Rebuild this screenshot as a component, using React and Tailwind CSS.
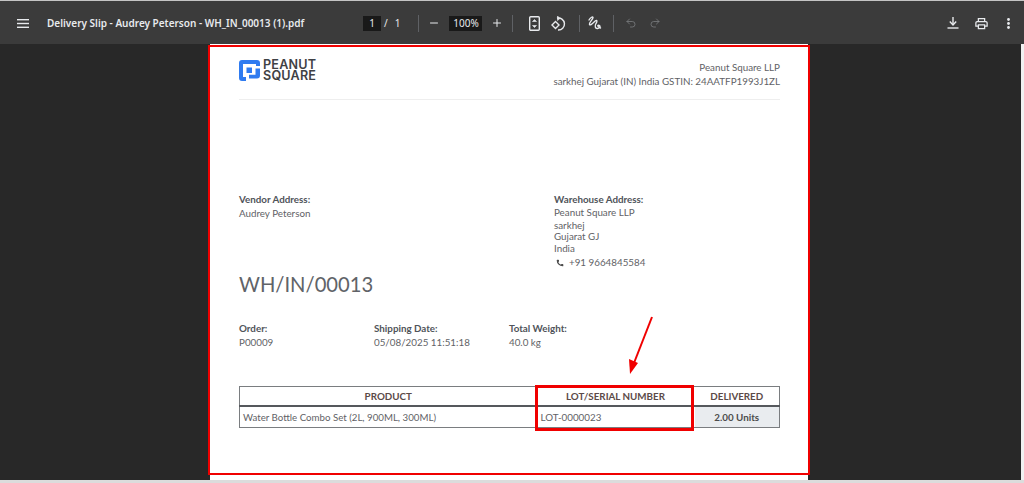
import React from 'react';
import { Minus, Plus, Undo2, Redo2, Phone } from 'lucide-react';

const Sep = () => <div className="w-px h-[17px] bg-[#5f6165]" />;

const Logo = () => (
  <svg width="21" height="21" viewBox="0 0 21 21" fill="#2f7bf0">
    <path d="M3 0H18A3 3 0 0 1 21 3V6H17V4H4V17H7V21H3A3 3 0 0 1 0 18V3A3 3 0 0 1 3 0Z" />
    <rect x="7.5" y="7.5" width="5.5" height="5.5" />
    <path d="M16.5 8.5H21V15.5A3 3 0 0 1 18 18.5H10V14.8H16.5Z" />
  </svg>
);

const MenuIcon = () => (
  <svg width="12" height="9" viewBox="0 0 12 9" fill="#e8eaed">
    <rect width="12" height="1.4" />
    <rect y="3.8" width="12" height="1.4" />
    <rect y="7.6" width="12" height="1.4" />
  </svg>
);

const FitIcon = () => (
  <svg width="11" height="15" viewBox="0 0 11 15" fill="none" stroke="#e8eaed" strokeWidth="1.4">
    <rect x="0.7" y="0.7" width="9.6" height="13.6" rx="1" />
    <path d="M3.5 5.5L5.5 3.5 7.5 5.5ZM3.5 9.5L5.5 11.5 7.5 9.5Z" fill="#e8eaed" strokeWidth="0.6" />
  </svg>
);

const RotateIcon = () => (
  <svg width="16" height="15" viewBox="0 0 16 15" fill="none" stroke="#e8eaed" strokeWidth="1.4">
    <path d="M6 2.2A6 6 0 1 1 7 14" />
    <path d="M6.5 0L9 2.4 6.5 4.6Z" fill="#e8eaed" strokeWidth="0.6" />
    <path d="M4.5 5.5L8 9 4.5 12.5 1 9Z" />
  </svg>
);

const DrawIcon = () => (
  <svg width="14" height="14" viewBox="0 0 14 14" fill="none" stroke="#e8eaed" strokeWidth="1.4" strokeLinecap="round">
    <path d="M1 4C2.5 1.5 5 0 5 1.5C5 3.5 0.8 6.5 1.5 8.5C2.5 10 5.5 6.5 7.5 4.8C9 3.5 9.5 5.5 8 7.5C6.5 10 7.2 12.8 9.5 12.5C11.8 12 13 10 11 9.3C9.5 9 8.8 10.5 12.5 12" />
  </svg>
);

const DownloadIcon = () => (
  <svg width="12" height="12" viewBox="0 0 12 12" fill="none" stroke="#e8eaed" strokeWidth="1.4">
    <path d="M6 0V7.5" />
    <path d="M2.8 4.6L6 8 9.2 4.6" />
    <path d="M0.5 11H11.5" />
  </svg>
);

const PrintIcon = () => (
  <svg width="15" height="15" viewBox="0 0 24 24" fill="#e8eaed">
    <path d="M19 8h-1V3H6v5H5c-1.66 0-3 1.34-3 3v6h4v4h12v-4h4v-6c0-1.66-1.34-3-3-3zM8 5h8v3H8V5zm8 12v2H8v-4h8v2zm2-2v-2H6v2H4v-4c0-.55.45-1 1-1h14c.55 0 1 .45 1 1v4h-2z" />
  </svg>
);

const DotsIcon = () => (
  <svg width="3" height="11" viewBox="0 0 3 11" fill="#e8eaed">
    <circle cx="1.5" cy="1.5" r="1.4" />
    <circle cx="1.5" cy="5.5" r="1.4" />
    <circle cx="1.5" cy="9.5" r="1.4" />
  </svg>
);

const Toolbar = () => (
  <header className="h-[43px] pt-[1px] shrink-0 bg-[#3b3b3b] flex items-center text-[#e8eaed] font-['Noto_Sans',sans-serif]">
    <div className="ml-[17px] mr-[18px] flex"><MenuIcon /></div>
    <div className="w-[316px] text-[10px] font-semibold whitespace-nowrap">Delivery Slip - Audrey Peterson - WH_IN_00013 (1).pdf</div>
    <div className="flex items-center text-[10px]">
      <div className="w-[18px] h-[15px] bg-[#191919] flex items-center justify-center">1</div>
      <span className="ml-[3px]">/</span>
      <span className="ml-[7px]">1</span>
      <div className="ml-[18px]"><Sep /></div>
      <Minus size={12} className="ml-[9px]" strokeWidth={2} />
      <div className="ml-[9px] w-[33px] h-[15px] bg-[#191919] flex items-center justify-center">100%</div>
      <Plus size={12} className="ml-[9px]" strokeWidth={2} />
      <div className="ml-[9px]"><Sep /></div>
      <div className="ml-[16px] flex"><FitIcon /></div>
      <div className="ml-[11px] flex"><RotateIcon /></div>
      <div className="ml-[12px]"><Sep /></div>
      <div className="ml-[8px] flex"><DrawIcon /></div>
      <div className="ml-[11px]"><Sep /></div>
      <Undo2 size={12} className="ml-[11px] text-[#7b7d80]" strokeWidth={1.6} />
      <Redo2 size={12} className="ml-[12px] text-[#7b7d80]" strokeWidth={1.6} />
    </div>
    <div className="ml-auto flex items-center">
      <DownloadIcon />
      <div className="ml-[15px] flex"><PrintIcon /></div>
      <div className="ml-[18px] mr-[14px] flex"><DotsIcon /></div>
    </div>
  </header>
);

const Field = ({ label, children, className }) => (
  <div className={className}>
    <div className="font-bold text-[#50545a]">{label}</div>
    <div className="mt-[2px]">{children}</div>
  </div>
);

const Document = () => (
  <div className="w-[598px] shrink-0 bg-white pl-[29px] pr-[28px] text-[#5f6266] text-[9.8px] leading-[12px] font-['Lato',sans-serif]">
    <div className="pt-[16px] h-[56px] flex justify-between border-b border-[#eeeeee]">
      <div className="flex items-start">
        <Logo />
        <div className="ml-[3px] text-[#3f4145] text-[12.6px] leading-[10.5px] tracking-[0.2px] font-semibold font-['Inter',sans-serif]">
          <div>PEANUT</div>
          <div>SQUARE</div>
        </div>
      </div>
      <div className="text-right leading-[14px]">
        <div>Peanut Square LLP</div>
        <div>sarkhej Gujarat (IN) India GSTIN: 24AATFP1993J1ZL</div>
      </div>
    </div>

    <div className="mt-[93px] flex">
      <Field label="Vendor Address:" className="w-[315px]">Audrey Peterson</Field>
      <Field label="Warehouse Address:">
        <div className="leading-[11.5px]">
          <div className="pb-[1px]">Peanut Square LLP</div>
          <div>sarkhej</div>
          <div>Gujarat GJ</div>
          <div>India</div>
          <div className="mt-[3px] flex items-center">
            <Phone size={8} fill="#4c4c4c" strokeWidth={0} className="ml-[2px] mr-[5px]" />
            +91 9664845584
          </div>
        </div>
      </Field>
    </div>

    <h1 className="mt-[2px] text-[20.2px] leading-[26px] font-normal text-[#606368]">WH/IN/00013</h1>

    <div className="mt-[25px] flex">
      <Field label="Order:" className="w-[135px]">P00009</Field>
      <Field label="Shipping Date:" className="w-[135px]">05/08/2025 11:51:18</Field>
      <Field label="Total Weight:">40.0 kg</Field>
    </div>

    <table className="mt-[38px] w-[541px] border border-[#7a7d80] border-collapse table-fixed">
      <thead>
        <tr className="h-[20px] border-b-2 border-[#55585c] text-[#5b4a48]">
          <th className="w-[297px] font-bold">PRODUCT</th>
          <th className="w-[158px] font-bold">LOT/SERIAL NUMBER</th>
          <th className="font-bold">DELIVERED</th>
        </tr>
      </thead>
      <tbody>
        <tr className="h-[21px]">
          <td className="pl-[3px] text-[9.7px]">Water Bottle Combo Set (2L, 900ML, 300ML)</td>
          <td className="pl-[4px]">LOT-0000023</td>
          <td className="text-center font-bold text-[#4c4c4c] bg-[#e9ecef]">2.00 Units</td>
        </tr>
      </tbody>
    </table>
    <div className="h-[60px]" />
  </div>
);

export default function App() {
  return (
    <div className="relative w-[1024px] h-[483px] overflow-hidden flex flex-col bg-[#282828] border-t border-[#c4c4c4]">
      <Toolbar />
      <main className="flex-1 flex justify-center overflow-hidden pr-[6px]">
        <Document />
      </main>
      <div className="absolute right-0 top-[43px] bottom-0 w-[3px] bg-[#f1f1f1]" />
      <div className="absolute left-0 right-0 bottom-0 h-[3px] bg-[#dcdcdc]" />

      {/* red annotations on top of the pdf */}
      <div className="absolute left-[208px] top-[44px] w-[602px] h-[430px] border-2 border-[#f00000]" />
      <div className="absolute left-[535px] top-[384px] w-[159px] h-[46px] border-[3px] border-[#f00000]" />
      <svg className="absolute left-[625px] top-[312px]" width="32" height="64" viewBox="0 0 32 64">
        <path d="M27 4L9 50" stroke="#f00000" strokeWidth="2" />
        <path d="M5 61L4 46 13 50Z" fill="#f00000" />
      </svg>
    </div>
  );
}
